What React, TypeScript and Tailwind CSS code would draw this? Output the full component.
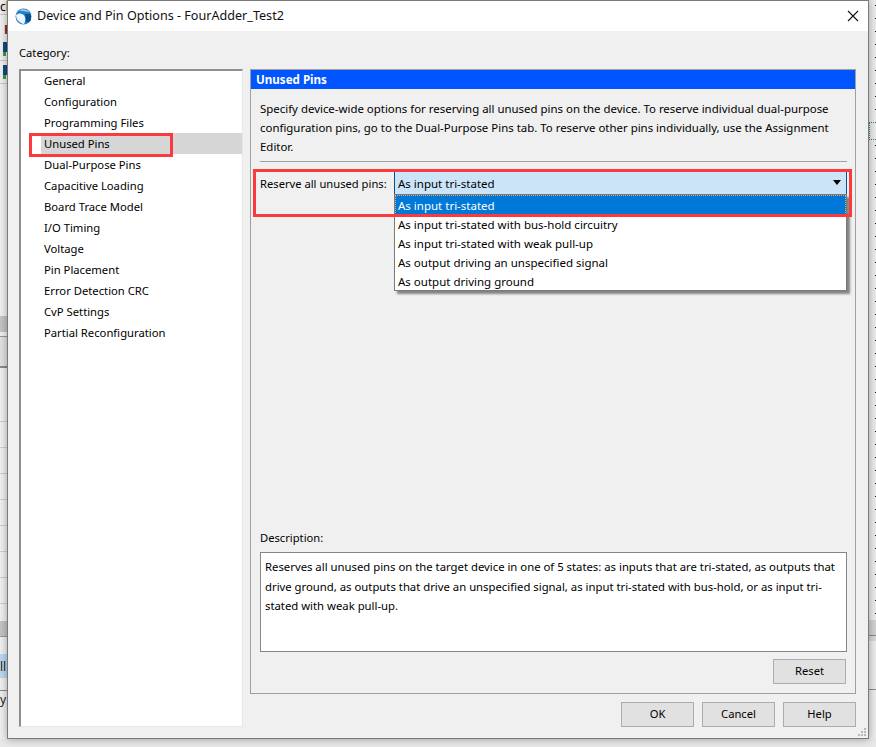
const font = "[font-family:'Noto_Sans',sans-serif]"

const categories = [
  "General",
  "Configuration",
  "Programming Files",
  "Unused Pins",
  "Dual-Purpose Pins",
  "Capacitive Loading",
  "Board Trace Model",
  "I/O Timing",
  "Voltage",
  "Pin Placement",
  "Error Detection CRC",
  "CvP Settings",
  "Partial Reconfiguration",
]

const options = [
  "As input tri-stated",
  "As input tri-stated with bus-hold circuitry",
  "As input tri-stated with weak pull-up",
  "As output driving an unspecified signal",
  "As output driving ground",
]

function DialogButton({ label }: { label: string }) {
  return (
    <button className="w-[73px] h-[25px] bg-[#e1e1e1] border border-[#adadad] text-[11.2px] text-black">
      {label}
    </button>
  )
}

function LeftStrip() {
  return (
    <div className="w-[7px] shrink-0 flex flex-col bg-[#f0f0f0] overflow-hidden text-xs leading-none">
      <div className="h-[15px] border-b border-[#c8c8c8] pt-px text-black">cl</div>
      <div className="h-[23px] pt-[9px] pl-[4px] font-bold text-[#7a1f1f]">P</div>
      <div className="h-[23px] pt-[4px] pl-[3px] border-b border-[#c8c8c8]">
        <div className="w-[4px] h-[10px] bg-[#0f4c81]" />
        <div className="w-[3px] h-[4px] bg-[#3f9a4a]" />
      </div>
      <div className="h-[23px] pt-[4px] pl-[3px] border-b border-[#c8c8c8]">
        <div className="w-[4px] h-[10px] bg-[#0f4c81]" />
        <div className="w-[3px] h-[4px] bg-[#3f9a4a]" />
      </div>
      <div className="h-[232px]" />
      <div className="h-[16px] bg-[#c4c4c4]" />
      <div className="h-[5px] border-b border-[#9a9a9a]" />
      <div className="h-[31px] bg-[#e2e2e2] border-b-2 border-[#8a8a8a]" />
      <div className="h-[28px]" />
      {[0, 1, 2, 3, 4, 5, 6, 7].map((i) => (
        <div key={i} className="h-[26px] border-b border-[#cfcfcf]" />
      ))}
      <div className="h-[17px]" />
      <div className="h-[15px] bg-[#c4c4c4]" />
      <div className="h-[18px] border-t border-[#9a9a9a]" />
      <div className="h-[24px] pt-[7px] bg-[#bcd9f2] text-[#222]">ll</div>
      <div className="h-[13px] border-b border-[#8a8a8a]" />
      <div className="pt-[3px] text-[#222]">y</div>
    </div>
  )
}

function RightStrip() {
  return (
    <div className="w-[7px] shrink-0 flex flex-col bg-[#ececec]">
      <div className="h-[122px] w-px self-end bg-[repeating-linear-gradient(to_bottom,transparent_0_5px,#111_5px_6px,transparent_6px_13px)]" />
      <div className="h-[18px] border-y border-l border-dotted border-[#2a8a8a]" />
      <div className="h-[480px] w-px self-end bg-[repeating-linear-gradient(to_bottom,transparent_0_5px,#111_5px_6px,transparent_6px_13px)]" />
      <div className="h-[16px] bg-[#d2d2d2] border-b border-[#8a8a8a]" />
      <div className="h-[5px] bg-[#d8d8d8]" />
      <div className="h-[48px]" />
      <div className="h-px bg-[#8a8a8a]" />
    </div>
  )
}

function TitleBar() {
  return (
    <div className="h-[30px] bg-white flex items-center pl-[7px] pr-[8px] shrink-0">
      <svg width="17" height="17" viewBox="0 0 17 17" className="shrink-0">
        <circle cx="8.5" cy="8.5" r="8" fill="#1f7fc9" />
        <path d="M1 7 C3.5 4.5 8 5 9.5 8 C10.5 10.5 10.5 13.5 9 16 C5 15.5 1 12 1 7 Z" fill="#eef6fc" />
        <path d="M4 2.5 C7 0.5 12 1 14.5 4 C11 3.5 7 3 4 2.5 Z" fill="#9ccdf0" />
        <path d="M10 6 H14.5 Q16 6 16 8 V11 Q16 14 12 14 H11 Q11.5 10 10 6 Z" fill="#0b4f8f" />
      </svg>
      <span className="ml-[5px] text-[12.6px] text-[#111] whitespace-nowrap">Device and Pin Options - FourAdder_Test2</span>
      <svg width="12" height="12" viewBox="0 0 12 12" className="ml-auto mr-[1px] shrink-0" fill="none" stroke="#111" strokeWidth="1.1">
        <path d="M1 1 L11 11 M11 1 L1 11" />
      </svg>
    </div>
  )
}

function CategoryList() {
  return (
    <div className="relative w-[224px] h-[658px] bg-white border-t-2 border-l-2 border-t-[#8f8f8f] border-l-[#8f8f8f] border-r border-b border-r-[#e8e8e8] border-b-[#e8e8e8] shrink-0">
      <div className="-mt-px">
        {categories.map((c) => (
          <div
            key={c}
            className={`h-[21px] ml-[20px] pl-[3px] pt-[2px] flex items-center text-[11.25px] text-black ${c === "Unused Pins" ? "bg-[#d6d6d6]" : ""}`}
          >
            {c}
          </div>
        ))}
      </div>
      <div className="absolute left-[8px] top-[62px] w-[144px] h-[24px] border-[3px] border-[#fa3a3f]" />
    </div>
  )
}

function OptionsPanel() {
  return (
    <div className="relative w-[606px] h-[625px] border border-[#a0a0a0] flex flex-col shrink-0">
      <div className="h-[19px] bg-[#0055ff] text-white font-bold text-[11.6px] pl-[5px] flex items-center shrink-0">
        Unused Pins
      </div>
      <div className="pl-[9px] pr-[8px] pt-[10px] flex flex-col flex-1 text-[11.2px] text-black">
        <p className="leading-[19px] text-[11.43px]">
          Specify device-wide options for reserving all unused pins on the device. To reserve individual dual-purpose
          <br />
          configuration pins, go to the Dual-Purpose Pins tab. To reserve other pins individually, use the Assignment
          <br />
          Editor.
        </p>
        <div className="h-px bg-[#a0a0a0] mt-[5px] shrink-0" />
        <div className="flex mt-[10px] h-[22px] shrink-0">
          <span className="w-[134px] leading-[23px] whitespace-nowrap">Reserve all unused pins:</span>
          <div className="relative flex-1 bg-[#cce4f7] border-l border-r border-[#005499] flex items-center pl-[3px] pt-px text-[11.5px]">
            As input tri-stated
            <svg width="8" height="5" viewBox="0 0 8 5" className="absolute right-[5px] top-[8px]">
              <path d="M0 0 H8 L4 5 Z" fill="#000" />
            </svg>
            <ul className="absolute left-[-1px] right-[-1px] top-[22px] h-[97px] bg-white border border-[#7a7a7a] shadow-[3px_3px_2px_rgba(0,0,0,0.45)]">
              {options.map((o, i) => (
                <li
                  key={o}
                  className={
                    i === 0
                      ? "h-[20px] bg-[#0078d7] text-white pl-[2px] pt-px flex items-center border border-dotted border-[#e8a860]"
                      : "h-[19px] pl-[3px] pt-px flex items-center text-black"
                  }
                >
                  {o}
                </li>
              ))}
            </ul>
          </div>
        </div>
        <div className="flex-1" />
        <div className="leading-[16px]">Description:</div>
        <div className="mt-[6px] h-[100px] bg-white border border-[#83878c] px-[4px] pt-[4px] leading-[19.5px] text-[11.32px] shrink-0">
          Reserves all unused pins on the target device in one of 5 states: as inputs that are tri-stated, as outputs that
          drive ground, as outputs that drive an unspecified signal, as input tri-stated with bus-hold, or as input
          tri-stated with weak pull-up.
        </div>
        <div className="flex justify-end mt-[7px] mb-[9px] mr-[1px] shrink-0">
          <DialogButton label="Reset" />
        </div>
      </div>
      <div className="absolute left-[2px] top-[99px] w-[599px] h-[48px] border-[3px] border-[#fa3a3f] pointer-events-none" />
    </div>
  )
}

export default function App() {
  return (
    <div className={`w-[876px] h-[747px] overflow-hidden flex flex-col bg-[#ebebeb] ${font}`}>
      <div className="flex h-[739px] shrink-0">
        <LeftStrip />
        <div className="relative w-[862px] h-[739px] shrink-0 bg-[#f0f0f0] border border-[#7a7a7a] flex flex-col shadow-[0_0_8px_rgba(0,0,0,0.35)]">
          <TitleBar />
          <div className="pl-[11px] pr-[11px] flex flex-col flex-1">
            <div className="h-[16px] mt-[14px] text-[11.2px] leading-[16px] text-black">Category:</div>
            <div className="flex gap-[7px] mt-[8px]">
              <CategoryList />
              <div className="flex flex-col">
                <OptionsPanel />
                <div className="flex justify-end gap-[8px] mt-[8px]">
                  <DialogButton label="OK" />
                  <DialogButton label="Cancel" />
                  <DialogButton label="Help" />
                </div>
              </div>
            </div>
          </div>
          <svg width="10" height="9" viewBox="0 0 10 9" className="absolute right-[1px] bottom-[1px]" fill="#b8b8b8">
            <rect x="7" y="0" width="2" height="2" />
            <rect x="4" y="3" width="2" height="2" />
            <rect x="7" y="3" width="2" height="2" />
            <rect x="1" y="6" width="2" height="2" />
            <rect x="4" y="6" width="2" height="2" />
            <rect x="7" y="6" width="2" height="2" />
          </svg>
        </div>
        <RightStrip />
      </div>
      <div className="h-[8px] bg-[#e8e8e8]" />
    </div>
  )
}
